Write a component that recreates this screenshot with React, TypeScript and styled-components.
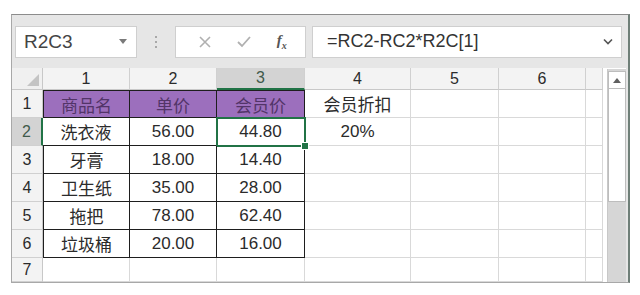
import React from "react";
import styled, { createGlobalStyle, css } from "styled-components";

const green = "#217346";
const grid = "#d9d9d9";
const ink = "#2b2b2b";
const purple = "#9c6fbd";

const Global = createGlobalStyle`
  html, body { margin: 0; background: #ffffff; }
  * { box-sizing: border-box; }
  body { font-family: "Liberation Sans", "Noto Sans CJK SC", sans-serif; }
`;

const Frame = styled.div`
  margin: 14px 0 0 11px;
  width: 619px;
  height: 269px;
  border-top: 1px solid #8c8c8c;
  border-left: 1px solid #a8a8a8;
  border-right: 2px solid #6f7f78;
  border-bottom: 1px solid #a8a8a8;
  background: #e6e6e6;
  display: flex;
  flex-direction: column;
  overflow: hidden;
`;

const Toolbar = styled.div`
  height: 54px;
  display: flex;
  align-items: center;
  padding: 0 6px 0 3px;
`;

const Box = styled.div<{ $w: number }>`
  width: ${(p) => p.$w}px;
  height: 32px;
  background: #fff;
  border: 1px solid #cfcfcf;
  display: flex;
  align-items: center;
`;

const NameText = styled.span`
  flex: 1;
  padding-left: 8px;
  font-size: 19px;
  color: #444;
`;

const Caret = styled.span`
  width: 0;
  height: 0;
  margin-right: 9px;
  border-left: 4px solid transparent;
  border-right: 4px solid transparent;
  border-top: 5px solid #7a7a7a;
`;

const Dots = styled.div`
  width: 38px;
  display: flex;
  flex-direction: column;
  align-items: center;
  gap: 3px;
  span {
    width: 2px;
    height: 2px;
    background: #a8a8a8;
  }
`;

const FxButtons = styled(Box)`
  justify-content: space-around;
  padding: 0 6px 0 10px;
  margin-right: 6px;
`;

const Fx = styled.span`
  font-family: "Liberation Serif", serif;
  font-style: italic;
  font-weight: bold;
  font-size: 15px;
  color: #555;
  sub {
    font-size: 10px;
  }
`;

const FormulaText = styled.span`
  flex: 1;
  padding-left: 14px;
  font-size: 18px;
  color: #333;
`;

const Chevron = styled.svg`
  margin-right: 8px;
`;

const Body = styled.div`
  flex: 1;
  display: flex;
  background: #fff;
`;

const Sheet = styled.div`
  width: 591px;
  display: grid;
  grid-template-columns: 31px 87px 87px 88px 106px 88px 87px 17px;
  grid-template-rows: 22px repeat(6, 28px) 24px;
  background: #fff;
`;

const Corner = styled.div`
  background: #f0f0f0;
  border-right: 1px solid #c8c8c8;
  border-bottom: 1px solid #c8c8c8;
  position: relative;
  &::after {
    content: "";
    position: absolute;
    right: 3px;
    bottom: 3px;
    border-left: 12px solid transparent;
    border-bottom: 12px solid #c4c4c4;
  }
`;

const ColHead = styled.div<{ $sel?: boolean }>`
  background: ${(p) => (p.$sel ? "#d3d3d3" : "#f3f3f3")};
  border-right: 1px solid #d0d0d0;
  border-bottom: ${(p) => (p.$sel ? `2px solid ${green}` : "1px solid #c8c8c8")};
  display: flex;
  align-items: center;
  justify-content: center;
  font-size: 16px;
  color: ${(p) => (p.$sel ? "#3f5a4b" : ink)};
`;

const RowHead = styled.div<{ $sel?: boolean }>`
  background: ${(p) => (p.$sel ? "#d3d3d3" : "#f3f3f3")};
  border-right: ${(p) => (p.$sel ? `2px solid ${green}` : "1px solid #c8c8c8")};
  border-bottom: 1px solid #d0d0d0;
  display: flex;
  align-items: center;
  justify-content: center;
  font-size: 16px;
  color: ${(p) => (p.$sel ? "#3f5a4b" : ink)};
`;

const Cell = styled.div<{ $boxed?: boolean; $head?: boolean; $top?: boolean; $first?: boolean; $sel?: boolean }>`
  position: relative;
  display: flex;
  align-items: center;
  justify-content: center;
  font-size: 17px;
  color: ${ink};
  border-right: 1px solid ${grid};
  border-bottom: 1px solid ${grid};
  ${(p) =>
    p.$boxed &&
    css`
      border-right-color: #1e1e1e;
      border-bottom-color: #1e1e1e;
    `}
  ${(p) => p.$first && css`border-left: 1px solid #1e1e1e;`}
  ${(p) => p.$top && css`border-top: 1px solid #1e1e1e;`}
  ${(p) =>
    p.$head &&
    css`
      background: ${purple};
      color: #523468;
    `}
  ${(p) =>
    p.$sel &&
    css`
      &::before {
        content: "";
        position: absolute;
        inset: -1px -2px -2px -1px;
        border: 2px solid ${green};
        pointer-events: none;
      }
      &::after {
        content: "";
        position: absolute;
        right: -5px;
        bottom: -5px;
        width: 6px;
        height: 6px;
        background: ${green};
        border: 1px solid #fff;
        z-index: 2;
      }
    `}
`;

const Gap = styled.div`
  width: 4px;
  background: #fff;
`;

const Scrollbar = styled.div`
  width: 19px;
  margin-top: 1px;
  display: flex;
  flex-direction: column;
  background: #d6d6d6;
  border-left: 1px solid #c8c8c8;
`;

const ArrowBtn = styled.div`
  height: 18px;
  margin-top: 2px;
  background: #fff;
  border: 1px solid #bdbdbd;
  display: flex;
  align-items: center;
  justify-content: center;
  &::after {
    content: "";
    border-left: 4px solid transparent;
    border-right: 4px solid transparent;
    border-bottom: 5px solid #606060;
  }
`;

const Thumb = styled.div`
  height: 113px;
  background: #fff;
  border: 1px solid #bdbdbd;
  border-top: none;
`;

const Edge = styled.div`
  flex: 1;
  background: #e6e6e6;
`;

// columns 1-6 plus the partly hidden seventh
const rows: string[][] = [
  ["商品名", "单价", "会员价", "会员折扣", "", "", ""],
  ["洗衣液", "56.00", "44.80", "20%", "", "", ""],
  ["牙膏", "18.00", "14.40", "", "", "", ""],
  ["卫生纸", "35.00", "28.00", "", "", "", ""],
  ["拖把", "78.00", "62.40", "", "", "", ""],
  ["垃圾桶", "20.00", "16.00", "", "", "", ""],
  ["", "", "", "", "", "", ""],
];

export default function App() {
  return (
    <>
      <Global />
      <Frame>
        <Toolbar>
          <Box $w={122}>
            <NameText>R2C3</NameText>
            <Caret />
          </Box>
          <Dots>
            <span />
            <span />
            <span />
          </Dots>
          <FxButtons $w={131}>
            <svg width="14" height="14" viewBox="0 0 14 14">
              <path d="M2 2 L12 12 M12 2 L2 12" stroke="#b0b0b0" strokeWidth="1.6" />
            </svg>
            <svg width="16" height="14" viewBox="0 0 16 14">
              <path d="M2 7 L6 11 L14 2" stroke="#b0b0b0" strokeWidth="1.8" fill="none" />
            </svg>
            <Fx>
              f<sub>x</sub>
            </Fx>
          </FxButtons>
          <Box $w={310}>
            <FormulaText>=RC2-RC2*R2C[1]</FormulaText>
            <Chevron width="10" height="7" viewBox="0 0 10 7">
              <path d="M1 1.5 L5 5.5 L9 1.5" stroke="#555" strokeWidth="1.6" fill="none" />
            </Chevron>
          </Box>
        </Toolbar>
        <Body>
          <Sheet>
            <Corner />
            {["1", "2", "3", "4", "5", "6", ""].map((h, i) => (
              <ColHead key={i} $sel={i === 2}>
                {h}
              </ColHead>
            ))}
            {rows.map((r, ri) => (
              <React.Fragment key={ri}>
                <RowHead $sel={ri === 1}>{ri + 1}</RowHead>
                {r.map((v, ci) => {
                  const boxed = ri < 6 && ci < 3;
                  return (
                    <Cell
                      key={ci}
                      $boxed={boxed}
                      $head={ri === 0 && ci < 3}
                      $top={ri === 0 && ci < 3}
                      $first={boxed && ci === 0 && ri !== 1}
                      $sel={ri === 1 && ci === 2}
                    >
                      {v}
                    </Cell>
                  );
                })}
              </React.Fragment>
            ))}
          </Sheet>
          <Gap />
          <Scrollbar>
            <ArrowBtn />
            <Thumb />
          </Scrollbar>
          <Edge />
        </Body>
      </Frame>
    </>
  );
}
